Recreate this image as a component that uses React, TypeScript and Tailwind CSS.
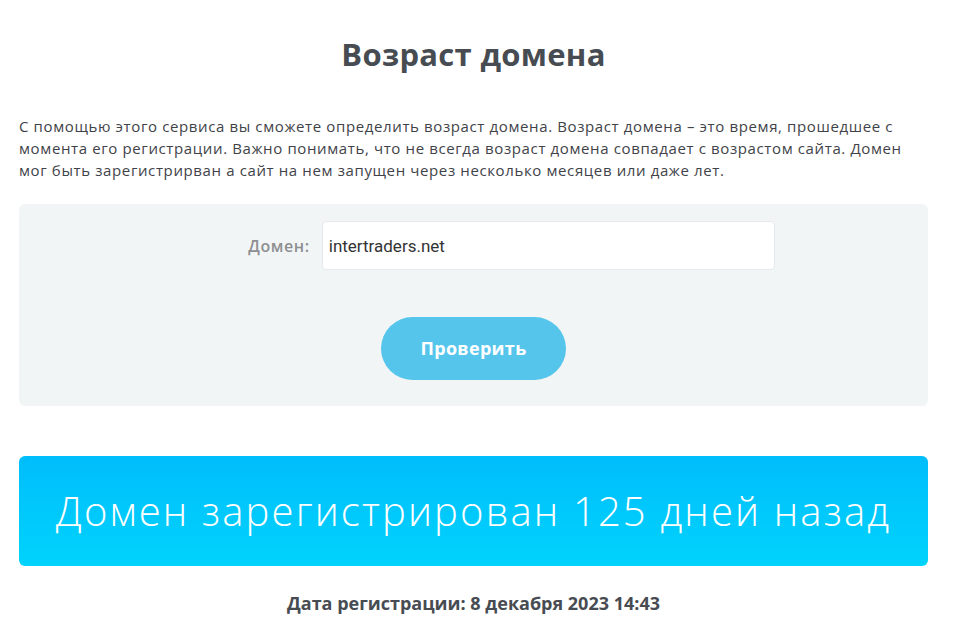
const DomainAge = () => {
    return (
        <div className="min-h-screen bg-white font-['Open_Sans',sans-serif] text-[#4b4f54]">
            <div className="px-[19px] pt-[34px] pb-6 w-[947px]">
                <h1 className="text-center text-[31px] font-bold text-[#474c52] leading-[40px] tracking-[0.3px]">Возраст домена</h1>

                <p className="mt-[41px] text-[15px] leading-[22px] tracking-[0.62px] text-[#3f4349]">
                    С помощью этого сервиса вы сможете определить возраст домена. Возраст домена – это время, прошедшее с
                    момента его регистрации. Важно понимать, что не всегда возраст домена совпадает с возрастом сайта. Домен
                    мог быть зарегистрирван а сайт на нем запущен через несколько месяцев или даже лет.
                </p>

                <div className="mt-[23px] bg-[#f2f5f6] rounded-md pt-[17px] pb-[26px] flex flex-col items-center">
                    <div className="flex items-center gap-3 pl-[76px]">
                        <label className="text-[16px] font-semibold tracking-[0.6px] text-[#8d8f91]">Домен:</label>
                        <input
                            defaultValue="intertraders.net"
                            className="w-[453px] h-[49px] bg-white border border-[#e6e9eb] rounded-sm px-[6px] text-[17px] text-[#333] font-['Roboto',sans-serif] outline-none"
                        />
                    </div>
                    <button className="mt-[47px] w-[185px] h-[63px] rounded-full bg-[#56c5ec] text-white text-[18px] font-bold tracking-[0.3px]">
                        Проверить
                    </button>
                </div>

                <div className="mt-[50px] h-[110px] rounded-md bg-gradient-to-b from-[#00bdfc] to-[#00d3fc] flex items-center justify-center">
                    <span className="text-white text-[40px] font-light tracking-[2.15px]">Домен зарегистрирован 125 дней назад</span>
                </div>

                <p className="mt-[24px] text-center text-[18px] font-bold text-[#474c52]">Дата регистрации: 8 декабря 2023 14:43</p>
            </div>
        </div>
    );
};

export default DomainAge;
